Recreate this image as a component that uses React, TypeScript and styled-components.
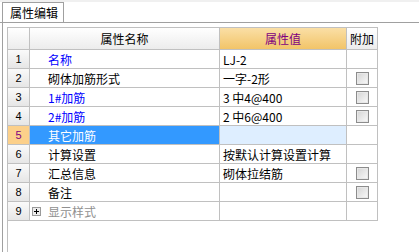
import styled, { createGlobalStyle, css } from 'styled-components';

const GlobalStyle = createGlobalStyle`
  html, body {
    margin: 0;
    padding: 0;
    background: #ffffff;
  }
  body {
    width: 419px;
    height: 252px;
    overflow: hidden;
    font-family: 'Noto Sans CJK SC', 'Liberation Sans', sans-serif;
    font-size: 12px;
    color: #000;
  }
`;

const Screen = styled.div`
  height: 252px;
  display: flex;
  flex-direction: column;
  border-top: 2px solid #f0f0f0;
  box-sizing: border-box;
`;

const TabStrip = styled.div`
  display: flex;
  height: 20px;
  padding-left: 2px;
  border-bottom: 1px solid #a0a0a0;
`;

const Tab = styled.div`
  width: 62px;
  height: 20px;
  box-sizing: border-box;
  border: 1px solid #a0a0a0;
  border-bottom: none;
  background: #fff;
  padding-left: 7px;
  line-height: 19px;
  font-size: 12px;
`;

const Panel = styled.div`
  flex: 1;
  margin-left: 2px;
  border-left: 1px solid #a0a0a0;
  padding: 4px 0 0 4px;
  display: flex;
`;

const Scroller = styled.div`
  flex: 1;
  border-left: 1px solid #c0c0c0;
`;

const Grid = styled.div`
  display: grid;
  grid-template-columns: 22px 190px 127px 31px;
  grid-template-rows: 22px;
  grid-auto-rows: 19px;
  width: 370px;
  border-top: 1px solid #c0c0c0;
`;

const Cell = styled.div<{ $bg?: string }>`
  border-right: 1px solid #c0c0c0;
  border-bottom: 1px solid #c0c0c0;
  display: flex;
  align-items: center;
  overflow: hidden;
  white-space: pre;
  background: ${(p) => p.$bg || '#fff'};
`;

const HeadCell = styled(Cell)<{ $hot?: boolean }>`
  justify-content: center;
  font-size: 12px;
  background: linear-gradient(#ffffff, #ececec);
  ${(p) =>
    p.$hot &&
    css`
      background: linear-gradient(#fadfa6, #f2c468);
      color: #800080;
    `}
`;

const NumCell = styled(Cell)<{ $hot?: boolean }>`
  justify-content: center;
  font-family: 'Liberation Sans', sans-serif;
  font-size: 11px;
  background: linear-gradient(#fafafa, #e6e6e6);
  ${(p) =>
    p.$hot &&
    css`
      background: #fcd08a;
      color: #800080;
    `}
`;

const NameCell = styled(Cell)<{ $tone?: 'blue' | 'gray'; $sel?: boolean }>`
  padding-left: 18px;
  color: ${(p) => (p.$tone === 'blue' ? '#0000ff' : p.$tone === 'gray' ? '#909090' : '#000')};
  ${(p) =>
    p.$sel &&
    css`
      background: #3399ff;
      color: #fff;
    `}
`;

const ValueCell = styled(Cell)<{ $sel?: boolean }>`
  padding-left: 3px;
  background: ${(p) => (p.$sel ? '#deeeff' : '#fff')};
`;

const CheckCell = styled(Cell)`
  justify-content: center;
`;

const Check = styled.span`
  width: 13px;
  height: 13px;
  box-sizing: border-box;
  border: 1px solid #8c8c8c;
  background: linear-gradient(135deg, #d4d4d4, #fafafa);
  box-shadow: inset 0 0 0 1px #e8e8e8;
`;

const Expander = styled.span`
  width: 9px;
  height: 9px;
  box-sizing: border-box;
  border: 1px solid #9a9a9a;
  background: #ececec;
  margin-left: -16px;
  margin-right: 7px;
  position: relative;
  &::before,
  &::after {
    content: '';
    position: absolute;
    background: #000;
  }
  &::before {
    left: 1px;
    top: 3px;
    width: 5px;
    height: 1px;
  }
  &::after {
    left: 3px;
    top: 1px;
    width: 1px;
    height: 5px;
  }
`;

type Row = {
  name: string;
  value: string;
  tone?: 'blue' | 'gray';
  check?: boolean;
  sel?: boolean;
  group?: boolean;
};

const rows: Row[] = [
  { name: '名称', value: 'LJ-2', tone: 'blue' },
  { name: '砌体加筋形式', value: '一字-2形', check: true },
  { name: '1#加筋', value: '3 中4@400', tone: 'blue', check: true },
  { name: '2#加筋', value: '2 中6@400', tone: 'blue', check: true },
  { name: '其它加筋', value: '', sel: true },
  { name: '计算设置', value: '按默认计算设置计算' },
  { name: '汇总信息', value: '砌体拉结筋', check: true },
  { name: '备注', value: '', check: true },
  { name: '显示样式', value: '', tone: 'gray', group: true },
];

export default function App() {
  return (
    <>
      <GlobalStyle />
      <Screen>
        <TabStrip>
          <Tab>属性编辑</Tab>
        </TabStrip>
        <Panel>
          <Scroller>
            <Grid>
              <HeadCell />
              <HeadCell>属性名称</HeadCell>
              <HeadCell $hot>属性值</HeadCell>
              <HeadCell>附加</HeadCell>
              {rows.map((r, i) => (
                <Row key={i} row={r} index={i + 1} />
              ))}
            </Grid>
          </Scroller>
        </Panel>
      </Screen>
    </>
  );
}

function Row({ row, index }: { row: Row; index: number }) {
  return (
    <>
      <NumCell $hot={row.sel}>{index}</NumCell>
      <NameCell $tone={row.tone} $sel={row.sel}>
        {row.group && <Expander />}
        {row.name}
      </NameCell>
      <ValueCell $sel={row.sel}>{row.value}</ValueCell>
      <CheckCell>{row.check && <Check />}</CheckCell>
    </>
  );
}
